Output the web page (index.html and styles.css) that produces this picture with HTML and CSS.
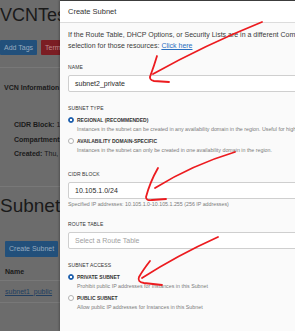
FILE: index.html
```html
<!DOCTYPE html>
<html>
<head>
<meta charset="utf-8">
<title>Create Subnet</title>
<link rel="stylesheet" href="styles.css">
</head>
<body>
<div class="screen">
  <main class="page">
    <h1 class="title">VCNTest</h1>
    <div class="actions">
      <span class="btn btn-blue">Add Tags</span>
      <span class="btn btn-red">Terminate</span>
    </div>
    <div class="tabs"><span class="tab">VCN Information</span></div>
    <div class="info">
      <div class="info-row"><b>CIDR Block:</b> 10.105.0.0/16</div>
      <div class="info-row"><b>Compartment:</b> demo</div>
      <div class="info-row"><b>Created:</b> Thu, Jan 1</div>
    </div>
    <h2 class="subtitle">Subnets</h2>
    <div class="toolbar"><span class="btn btn-blue">Create Subnet</span></div>
    <div class="table">
      <div class="thead">Name</div>
      <div class="trow"><span class="tlink">subnet1_public</span></div>
    </div>
  </main>

  <aside class="panel">
    <div class="panel-head">Create Subnet</div>
    <div class="panel-body">
      <div class="intro">
        <span class="intro-line">If the Route Table, DHCP Options, or Security Lists are in a different Compartment than the Subnet, enable Compartment</span>
        <span class="intro-line">selection for those resources: <span class="link">Click here</span></span>
      </div>

      <div class="field">
        <div class="label">Name</div>
        <div class="input">subnet2_private</div>
      </div>

      <div class="field">
        <div class="label">Subnet Type</div>
        <div class="option">
          <div class="radio-row"><span class="radio radio-on"></span>Regional (Recommended)</div>
          <div class="desc">Instances in the subnet can be created in any availability domain in the region. Useful for high availability.</div>
        </div>
        <div class="option">
          <div class="radio-row"><span class="radio"></span>Availability Domain-Specific</div>
          <div class="desc">Instances in the subnet can only be created in one availability domain in the region.</div>
        </div>
      </div>

      <div class="field field-loose">
        <div class="label">CIDR Block</div>
        <div class="input">10.105.1.0/24</div>
        <div class="help">Specified IP addresses: 10.105.1.0-10.105.1.255 (256 IP addresses)</div>
      </div>

      <div class="field">
        <div class="label">Route Table</div>
        <div class="input input-placeholder">Select a Route Table</div>
      </div>

      <div class="field">
        <div class="label">Subnet Access</div>
        <div class="option">
          <div class="radio-row"><span class="radio radio-on"></span>Private Subnet</div>
          <div class="desc">Prohibit public IP addresses for Instances in this Subnet</div>
        </div>
        <div class="option">
          <div class="radio-row"><span class="radio"></span>Public Subnet</div>
          <div class="desc">Allow public IP addresses for Instances in this Subnet</div>
        </div>
      </div>
    </div>
  </aside>

  <svg class="marks" width="295" height="331" viewBox="0 0 295 331">
    <g fill="none" stroke="#ec1b1f" stroke-width="1.8" stroke-linecap="round" stroke-linejoin="round">
      <path d="M262 22 Q 205 45 153 74"/>
      <path d="M157 56 Q 154 66 151 74 Q 148 80 154 81 L 169 82"/>
      <path d="M235 152 Q 192 165 155 188"/>
      <path d="M158 168 Q 150 182 146 197 Q 146 201 152 200 L 166 199"/>
      <path d="M218 237 Q 178 255 142 278"/>
      <path d="M150 261 Q 143 270 139 277 Q 137 282 144 283 L 162 285"/>
    </g>
  </svg>
</div>
</body>
</html>
```
FILE: styles.css
```css
* { box-sizing: border-box; }

html, body {
  margin: 0;
  padding: 0;
  width: 295px;
  height: 331px;
  overflow: hidden;
  font-family: "Liberation Sans", Arial, sans-serif;
}

.screen {
  position: relative;
  width: 295px;
  height: 331px;
  overflow: hidden;
  background: #6c6c6c;
}

/* dimmed page behind the panel */
.page {
  padding-top: 5px;
  color: #1a1a1a;
}

.title {
  margin: 0;
  font-size: 18px;
  line-height: 21px;
  font-weight: normal;
  white-space: nowrap;
}

.actions {
  display: flex;
  gap: 4px;
  margin-top: 14px;
}

.btn {
  display: inline-block;
  height: 15px;
  line-height: 15px;
  padding: 0 4px;
  font-size: 7px;
  white-space: nowrap;
  border-radius: 1px;
}

.btn-blue { background: #22507b; color: #97abbf; }
.btn-red { background: #7b1d23; color: #bd8a8d; }

.tabs {
  margin-top: 12px;
  border-top: 1px solid #787878;
  padding: 8px 0 0 4px;
}

.tab {
  font-size: 7px;
  line-height: 8px;
  font-weight: bold;
}

.info {
  margin-top: 24px;
  padding-left: 14px;
  padding-bottom: 24px;
  border-bottom: 1px solid #787878;
}

.info-row {
  font-size: 7px;
  line-height: 14.5px;
  white-space: nowrap;
}

.subtitle {
  margin: 9px 0 0;
  font-size: 19px;
  line-height: 20px;
  font-weight: normal;
}

.toolbar {
  margin-top: 21px;
  padding-left: 5px;
}

.toolbar .btn { height: 16px; line-height: 16px; }

.table { margin-top: 6px; }

.thead {
  height: 18px;
  line-height: 17px;
  padding-left: 5px;
  font-size: 7px;
  font-weight: bold;
  border-bottom: 1px solid #787878;
}

.trow {
  height: 22px;
  line-height: 21px;
  padding-left: 5px;
  font-size: 7px;
  border-bottom: 1px solid #787878;
}

.tlink {
  color: #213e60;
  text-decoration: underline;
}

/* slide-out panel */
.panel {
  position: absolute;
  left: 60px;
  top: 0;
  bottom: 0;
  width: 250px;
  background: #fafafa;
  border-top: 1px solid #3c3c3c;
  box-shadow: -1px 0 2px rgba(0, 0, 0, 0.25);
}

.panel-head {
  height: 22px;
  line-height: 21px;
  padding-left: 8px;
  background: #ffffff;
  border-bottom: 1px solid #dcdcdc;
  font-size: 7.5px;
  color: #333333;
}

.panel-body {
  padding: 6px 0 0 8px;
}

.intro {
  font-size: 7px;
  line-height: 11px;
  color: #3a3a3a;
}

.intro-line {
  display: block;
  white-space: nowrap;
}

.link {
  color: #2a6fc0;
  text-decoration: underline;
}

.field { margin-top: 13px; }
.field-loose { margin-top: 17px; }

.label {
  font-size: 5px;
  line-height: 6px;
  height: 6px;
  color: #333333;
  text-transform: uppercase;
  letter-spacing: 0.1px;
  margin-bottom: 5px;
}

.input {
  width: 250px;
  height: 17px;
  line-height: 15px;
  padding-left: 6px;
  background: #ffffff;
  border: 1px solid #cfcfcf;
  border-radius: 2px;
  font-size: 7px;
  color: #2a2a2a;
  white-space: nowrap;
}

.input-placeholder { color: #a0a0a0; }

.help {
  margin-top: 2.5px;
  font-size: 5.3px;
  line-height: 7px;
  color: #7a7a7a;
  white-space: nowrap;
}

.option { margin-top: 4.5px; }
.label + .option { margin-top: 2px; }

.radio-row {
  display: flex;
  align-items: center;
  gap: 3px;
  height: 7px;
  font-size: 5px;
  font-weight: bold;
  color: #333333;
  text-transform: uppercase;
  white-space: nowrap;
}

.radio {
  flex: none;
  width: 6px;
  height: 6px;
  border-radius: 50%;
  background: #ffffff;
  border: 1px solid #b3b3b3;
}

.radio-on {
  border-color: #1f60ad;
  background: radial-gradient(circle, #ffffff 0 1px, #1f60ad 1.3px);
}

.desc {
  margin-top: 2.5px;
  padding-left: 9px;
  font-size: 5.3px;
  line-height: 7px;
  color: #7a7a7a;
  white-space: nowrap;
}

/* hand-drawn annotation overlay */
.marks {
  position: absolute;
  left: 0;
  top: 0;
  pointer-events: none;
}
```
